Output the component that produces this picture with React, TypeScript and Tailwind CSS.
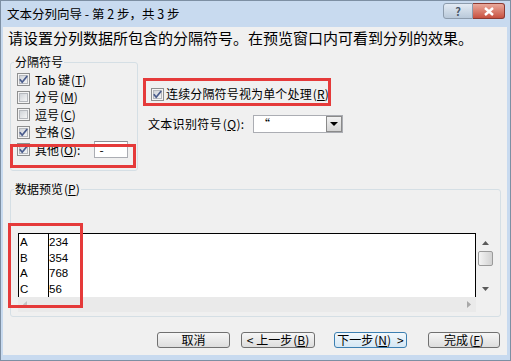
import React from 'react';

const cjk = "font-['Noto_Sans_CJK_SC','Noto_Sans',sans-serif]";

function CheckBox({ checked }: { checked?: boolean }) {
  return (
    <svg width="13" height="13" viewBox="0 0 13 13" className="shrink-0">
      <defs>
        <linearGradient id="cbfill" x1="0" y1="0" x2="1" y2="1">
          <stop offset="0" stopColor="#cdd1d6" />
          <stop offset="1" stopColor="#f7f7f7" />
        </linearGradient>
      </defs>
      <rect x="0.5" y="0.5" width="12" height="12" fill="#f4f4f4" stroke="#8e8f8f" />
      <rect x="2.5" y="2.5" width="8" height="8" fill="url(#cbfill)" stroke="#b5b8bd" />
      {checked && (
        <path d="M2.8 6.3 L5.2 9.2 L10.2 3" fill="none" stroke="#4a5c8c" strokeWidth="1.8" />
      )}
    </svg>
  );
}

function Key({ k }: { k: string }) {
  return (
    <span className="ml-[1px]">
      (<span className="underline">{k}</span>)
    </span>
  );
}

function OptionRow({ checked, label, k }: { checked?: boolean; label: string; k: string }) {
  return (
    <div className="flex h-[17.5px] items-center pl-[3px]">
      <CheckBox checked={checked} />
      <span className="ml-[5px] whitespace-nowrap text-[12px] leading-none">
        {label}
        <Key k={k} />
      </span>
    </div>
  );
}

function Btn({ children, focused, w, ml }: { children: React.ReactNode; focused?: boolean; w: string; ml: string }) {
  return (
    <div
      className={`${w} ${ml} flex h-[16px] items-center justify-center rounded-[3px] border text-[12px] leading-none ${
        focused
          ? 'border-[#3c7fb1] bg-gradient-to-b from-[#f2f8fc] to-[#d5e7f4]'
          : 'border-[#707070] bg-gradient-to-b from-[#f6f6f6] to-[#dddddd]'
      }`}
    >
      {children}
    </div>
  );
}

export default function App() {
  const rows = [
    ['A', '234'],
    ['B', '354'],
    ['A', '768'],
    ['C', '56'],
  ];
  return (
    <div className={`relative flex h-[361px] w-[511px] flex-col border border-[#7d8fa3] bg-[#c8daef] text-black ${cjk}`}>
      {/* title bar */}
      <div className="flex h-[26px] items-start justify-between pl-[6px] pr-[5px]">
        <span className="mt-[6px] whitespace-pre text-[12.5px] leading-[14px]">文本分列向导 - 第 2 步，共 3 步</span>
        <div className="mt-[2px] flex">
          <div className="flex h-[16px] w-[30px] items-center justify-center rounded-l-[3px] border border-[#8d9cad] bg-gradient-to-b from-[#e3ebf4] to-[#b9c9da] text-[11px] font-bold leading-none text-[#4a5868]">
            ?
          </div>
          <div className="flex h-[16px] w-[32px] items-center justify-center rounded-r-[3px] border border-l-0 border-[#8b3a32] bg-gradient-to-b from-[#e9a99c] to-[#c75040]">
            <svg width="12" height="9" viewBox="0 0 12 9">
              <path d="M2 1 L10 8 M10 1 L2 8" stroke="#fff" strokeWidth="2.4" />
            </svg>
          </div>
        </div>
      </div>

      {/* body */}
      <div className="ml-[2px] mr-[3px] mb-[5px] flex flex-1 flex-col bg-[#f0f0f0]">
        <div className="h-[22px] pl-[5px] text-[15px] leading-[22px] whitespace-nowrap">
          请设置分列数据所包含的分隔符号。在预览窗口内可看到分列的效果。
        </div>

        <div className="mt-[6px] flex">
          <fieldset className="ml-[7px] h-[116px] w-[128px] rounded-[3px] border border-[#d5dfe5] pl-[3px]">
            <legend className="px-[1px] text-[12px] leading-[14px]">分隔符号</legend>
            <div className="mt-[2px] flex flex-col">
              <OptionRow checked label="Tab 键" k="T" />
              <OptionRow label="分号" k="M" />
              <OptionRow label="逗号" k="C" />
              <OptionRow checked label="空格" k="S" />
              <div className="flex h-[17.5px] items-center pl-[3px]">
                <CheckBox checked />
                <span className="ml-[5px] whitespace-nowrap text-[12px] leading-none">
                  其他
                  <Key k="O" />:
                </span>
                <div className="ml-[14px] flex h-[17px] w-[34px] items-center border border-[#abadb3] border-t-[#8b8e94] bg-white pl-[4px] text-[12px] leading-none">
                  -
                </div>
              </div>
            </div>
          </fieldset>

          <div className="ml-[10px] flex flex-col pt-[30px]">
            <div className="flex h-[18px] items-center pl-[3px]">
              <CheckBox checked />
              <span className="ml-[2px] whitespace-nowrap text-[12px] leading-none tracking-[0.15px]">
                连续分隔符号视为单个处理
                <Key k="R" />
              </span>
            </div>
            <div className="mt-[12px] flex h-[18px] items-center">
              <span className="w-[105px] whitespace-nowrap text-[12px] leading-none tracking-[0.3px]">
                文本识别符号
                <Key k="Q" />:
              </span>
              <div className="flex h-[18px] w-[90px] items-center justify-between border border-[#abadb3] bg-white">
                <span className="pl-[4px] text-[12px] leading-none">“</span>
                <div className="flex h-[16px] w-[16px] items-center justify-center border border-[#8a8a8a] bg-gradient-to-b from-[#f2f2f2] to-[#d4d4d4]">
                  <svg width="8" height="4" viewBox="0 0 8 4">
                    <path d="M0 0 H8 L4 4 Z" fill="#000" />
                  </svg>
                </div>
              </div>
            </div>
          </div>
        </div>

        <fieldset className="ml-[7px] mt-[11px] h-[135px] w-[491px] rounded-[3px] border border-[#d5dfe5] pl-[3px]">
          <legend className="px-[1px] text-[12px] leading-[14px]">
            数据预览
            <Key k="P" />
          </legend>
          <div className="ml-[4px] mt-[37px] flex">
            <div className="flex w-[458px] flex-col">
              <div className="flex h-[64px] border border-b-0 border-black bg-white pt-[1px] font-['Liberation_Sans',sans-serif] text-[11.5px]">
                <div className="flex w-[29px] flex-col pl-[1px]">
                  {rows.map((r, i) => (
                    <div key={i} className="flex h-[16px] items-center leading-none">
                      {r[0]}
                    </div>
                  ))}
                </div>
                <div className="-mt-[1px] flex flex-col border-l border-black pt-[1px]">
                  {rows.map((r, i) => (
                    <div key={i} className="flex h-[16px] items-center leading-none">
                      {r[1]}
                    </div>
                  ))}
                </div>
              </div>
              <div className="flex h-[15px] items-center justify-between bg-[#eaeaea] px-[5px]">
                <svg width="4" height="7" viewBox="0 0 4 7">
                  <path d="M4 0 V7 L0 3.5 Z" fill="#c4c4c4" />
                </svg>
                <svg width="4" height="7" viewBox="0 0 4 7">
                  <path d="M0 0 V7 L4 3.5 Z" fill="#a8a8a8" />
                </svg>
              </div>
            </div>
            <div className="flex w-[19px] flex-col items-center pt-[8px]">
              <svg width="7" height="4" viewBox="0 0 7 4">
                <path d="M0 4 H7 L3.5 0 Z" fill="#5a5a5a" />
              </svg>
              <div className="mt-[6px] h-[15px] w-[15px] rounded-[2px] border border-[#9a9a9a] bg-gradient-to-r from-[#f4f4f4] to-[#d2d2d2]" />
              <svg className="mt-[21px]" width="7" height="4" viewBox="0 0 7 4">
                <path d="M0 0 H7 L3.5 4 Z" fill="#5a5a5a" />
              </svg>
            </div>
          </div>
        </fieldset>

        <div className="mt-[15px] flex">
          <Btn w="w-[73px]" ml="ml-[154px]">取消</Btn>
          <Btn w="w-[74px]" ml="ml-[11px]">
            &lt; 上一步
            <Key k="B" />
          </Btn>
          <Btn w="w-[73px]" ml="ml-[19px]" focused>
            下一步
            <Key k="N" />
            <span className="ml-[6px]">&gt;</span>
          </Btn>
          <Btn w="w-[72px]" ml="ml-[21px]">
            完成
            <Key k="F" />
          </Btn>
        </div>
      </div>

      {/* red annotation boxes */}
      <div className="pointer-events-none absolute left-[9px] top-[143px] h-[24px] w-[126px] border-[3px] border-[#e53a3a]" />
      <div className="pointer-events-none absolute left-[142px] top-[77px] h-[28px] w-[188px] border-[3px] border-[#e53a3a]" />
      <div className="pointer-events-none absolute left-[7px] top-[222px] h-[85px] w-[75px] border-[3px] border-[#e53a3a]" />
    </div>
  );
}
